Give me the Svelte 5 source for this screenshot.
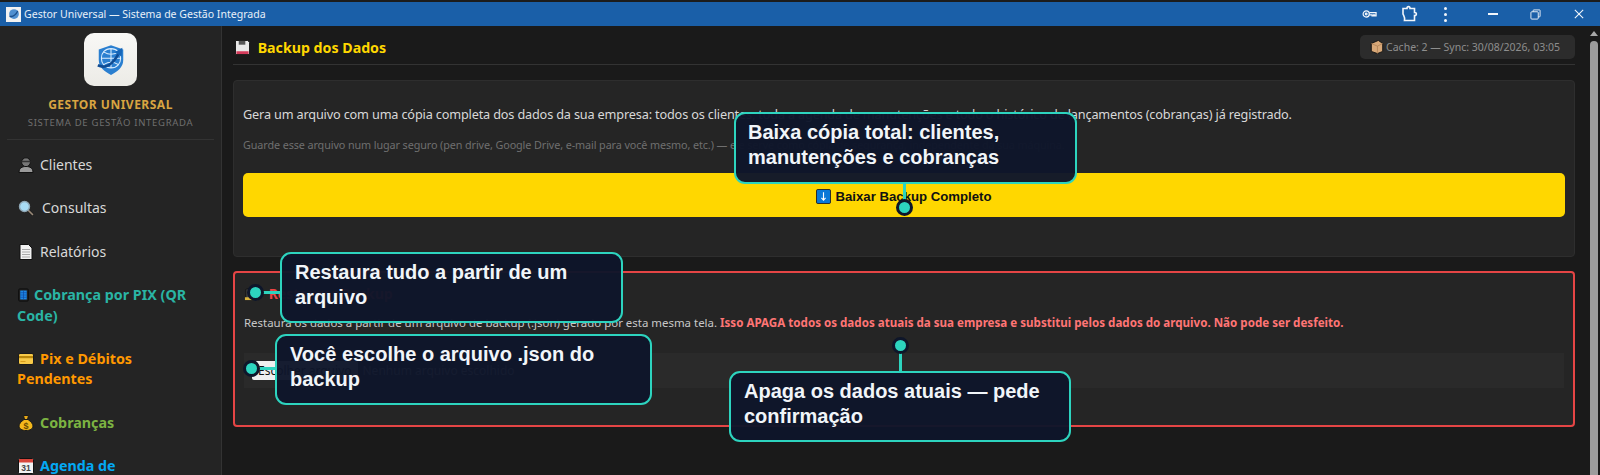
<script>
	// menu lateral, na mesma ordem do app
	const nav = [
		{ icon: 'person', label: 'Clientes', color: '#d8d8d8' },
		{ icon: 'search', label: 'Consultas', color: '#d8d8d8' },
		{ icon: 'doc', label: 'Relatórios', color: '#d8d8d8' },
		{ icon: 'phone', label: 'Cobrança por PIX (QR Code)', color: '#2ab5a5', bold: true },
		{ icon: 'credit', label: 'Pix e Débitos Pendentes', color: '#ff9800', bold: true },
		{ icon: 'bag', label: 'Cobranças', color: '#7cb342', bold: true },
		{ icon: 'cal', label: 'Agenda de Manutenções', color: '#03a9f4', bold: true }
	];
</script>

{#snippet emoji(name)}
	<svg class="emoji {name}" viewBox="0 0 16 16" aria-hidden="true">
		{#if name === 'person'}
			<circle cx="8" cy="5.2" r="4.4" fill="#777" stroke="#111" />
			<path d="M3.500 4.500h9" stroke="#333" stroke-width="1.500" />
			<path d="M1 15.500c0-4.500 3-6 7-6s7 1.500 7 6z" fill="#9a9a9a" stroke="#111" />
		{:else if name === 'search'}
			<path d="M10 10l4.500 4.500" stroke="#222" stroke-width="3.400" stroke-linecap="round" />
			<path d="M10 10l4.500 4.500" stroke="#9a8a78" stroke-width="1.600" stroke-linecap="round" />
			<circle cx="6.500" cy="6.500" r="5" fill="#a8dcf5" stroke="#8fa7b5" stroke-width="1.400" />
		{:else if name === 'doc'}
			<path d="M2 0.500h8.500l3.500 3.500v11.500H2z" fill="#f2f2f2" stroke="#111" />
			<path d="M4 5.500h8M4 8h8M4 10.500h8M4 13h8" stroke="#a0a0a0" stroke-width="0.900" />
		{:else if name === 'phone'}
			<rect x="2" y="0.500" width="12" height="15" rx="1.500" fill="#222" stroke="#0a0a0a" />
			<rect x="4" y="2.500" width="8" height="11" fill="#1e88e5" />
			<path d="M4 5.200h8M4 8h8M4 10.800h8M8 2.500v11" stroke="#0d47a1" stroke-width="0.800" />
		{:else if name === 'credit'}
			<rect x="0.500" y="2.500" width="15" height="11" rx="1.500" fill="#f7c948" stroke="#1a1a1a" />
			<rect x="1" y="5" width="14" height="2.200" fill="#b8860b" />
			<path d="M2.500 10.500h5" stroke="#d99c1c" />
		{:else if name === 'bag'}
			<path d="M5.500 0.500h5L9.500 4.500h-3z" fill="#e8a917" stroke="#1a1a1a" />
			<path d="M6 4.500h4c3 2 5 4.500 5 6.500 0 3-3 4.500-7 4.500S1 14 1 11c0-2 2-4.500 5-6.500z" fill="#f4b81c" stroke="#1a1a1a" />
			<text x="8" y="13.500" class="dollar">$</text>
		{:else if name === 'cal'}
			<rect x="0.500" y="0.500" width="15" height="15" rx="1" fill="#f2f2f2" stroke="#111" />
			<rect x="1" y="1" width="14" height="3.500" fill="#d9453a" />
			<text x="8" y="13" class="day">31</text>
		{/if}
	</svg>
{/snippet}

<div class="window">
	<header class="titlebar">
		<div class="app-title">
			<span class="app-icon">
				<svg viewBox="0 0 16 16" width="12" height="12" aria-hidden="true">
					<circle cx="8" cy="8" r="6.500" fill="#4f8fd0" />
					<path d="M2 11c4 1 8-1 11-7" stroke="#1c4f8c" stroke-width="1.800" fill="none" />
				</svg>
			</span>
			Gestor Universal — Sistema de Gestão Integrada
		</div>
		<div class="title-tools">
			<svg class="tool key" viewBox="0 0 16 10" aria-hidden="true">
				<circle cx="4.500" cy="5" r="3.300" />
				<circle cx="4.500" cy="5" r="0.900" />
				<path d="M7.800 3.500h7.200v3.400h-1.500v-1h-1.300v1h-1.500v-1H7.800" />
			</svg>
			<svg class="tool puzzle" viewBox="0 0 18 18" aria-hidden="true">
				<path d="M3 3.500h4c-.5-2.500 3.500-2.500 3 0h4.500v4c2.500-.5 2.500 3.500 0 3v5H4.500c.8-3-1-5-1.500-6.500z" />
			</svg>
			<span class="kebab"><i></i><i></i><i></i></span>
			<span class="min"></span>
			<svg class="tool restore" viewBox="0 0 12 12" aria-hidden="true">
				<rect x="1" y="3" width="8" height="8" rx="1" />
				<path d="M3.500 3V1.500a.5.5 0 0 1 .5-.5h6.500a.5.5 0 0 1 .5.5V8a.5.5 0 0 1-.5.5H9" />
			</svg>
			<svg class="tool close" viewBox="0 0 12 12" aria-hidden="true">
				<path d="M1 1l10 10M11 1L1 11" />
			</svg>
		</div>
	</header>

	<div class="body">
		<aside class="sidebar">
			<div class="brand">
				<div class="logo">
					<svg viewBox="0 0 32 36" aria-hidden="true">
						<path d="M16 1l14 5v12c0 8-6 13-14 17C8 31 2 26 2 18V6z" fill="#2a7fd0" />
						<path d="M16 5c7 0 11 5 11 11s-4 11-11 11S5 22 5 16 9 5 16 5zM5 16h22M16 5v22M8 9c5 3 11 3 16 0M8 23c5-3 11-3 16 0" fill="none" stroke="#dbeeff" stroke-width="1.200" />
						<path d="M1 24c8 4 17 0 24-14" fill="none" stroke="#0f4c94" stroke-width="3" />
						<path d="M29 4l-1 10-8-5z" fill="#1766b8" />
					</svg>
				</div>
				<div class="brand-name">GESTOR UNIVERSAL</div>
				<div class="brand-sub">SISTEMA DE GESTÃO INTEGRADA</div>
			</div>
			<nav>
				{#each nav as item}
					<a href="#/" class:bold={item.bold} style="color: {item.color}">
						{@render emoji(item.icon)}{item.label}
					</a>
				{/each}
			</nav>
		</aside>

		<main>
			<div class="page-head">
				<h1>
					<svg class="floppy" viewBox="0 0 16 16" aria-hidden="true">
						<path d="M0.500 0.500h13l2 2v13H0.500z" fill="#e8e8e8" stroke="#111" />
						<rect x="1.500" y="12" width="13" height="3" fill="#d43a5a" />
						<rect x="4" y="1" width="7" height="4" fill="#555" />
					</svg>
					Backup dos Dados
				</h1>
				<div class="cache">
					<svg viewBox="0 0 16 16" aria-hidden="true">
						<path d="M1.500 4l8-3.500 5 3.500v9l-6 2.500-7-2.500z" fill="#d8a878" stroke="#111" />
						<path d="M1.500 4l7 3 6-3M8.500 7v8.500" fill="none" stroke="#a87a50" stroke-width="0.800" />
					</svg>
					Cache: 2 — Sync: 30/08/2026, 03:05
				</div>
			</div>

			<section class="card">
				<p class="lead">Gera um arquivo com uma cópia completa dos dados da sua empresa: todos os clientes, toda a agenda de manutenções e todo o histórico de lançamentos (cobranças) já registrado.</p>
				<p class="hint">Guarde esse arquivo num lugar seguro (pen drive, Google Drive, e-mail para você mesmo, etc.) — ele serve como cópia de segurança, independente da sua máquina.</p>
				<button class="download">
					<svg viewBox="0 0 16 16" aria-hidden="true">
						<rect x="0.500" y="0.500" width="15" height="15" rx="1.500" fill="#0a78d7" stroke="#222" />
						<path d="M8 3.500v8M5.800 9.500L8 12l2.200-2.500" stroke="#fff" stroke-width="1.200" fill="none" />
					</svg>
					Baixar Backup Completo
				</button>
			</section>

			<section class="card danger">
				<h2>
					<svg viewBox="0 0 16 16" aria-hidden="true">
						<rect x="2" y="3" width="12" height="11" rx="1" fill="#444" stroke="#111" />
						<rect x="1" y="12" width="14" height="3" fill="#d8b23a" />
					</svg>
					Restaurar Backup
				</h2>
				<p class="warn">Restaura os dados a partir de um arquivo de backup (.json) gerado por esta mesma tela. <strong>Isso APAGA todos os dados atuais da sua empresa e substitui pelos dados do arquivo. Não pode ser desfeito.</strong></p>
				<div class="file-row">
					<span class="file-btn">Escolher arquivo</span>
					<span class="file-name">Nenhum arquivo escolhido</span>
				</div>
			</section>
		</main>

		<div class="scrollbar"><span class="up"></span><span class="thumb"></span></div>
	</div>

	<!-- anotações do tutorial por cima da tela -->
	<div class="callout c1">Baixa cópia total: clientes, manutenções e cobranças</div>
	<span class="wire v w1"></span><span class="dot d1"></span>
	<div class="callout c2">Restaura tudo a partir de um arquivo</div>
	<span class="wire h w2"></span><span class="dot d2"></span>
	<div class="callout c3">Você escolhe o arquivo .json do backup</div>
	<span class="wire h w3"></span><span class="dot d3"></span>
	<div class="callout c4">Apaga os dados atuais — pede confirmação</div>
	<span class="wire v w4"></span><span class="dot d4"></span>
</div>

<style>
	:global(body) {
		background: #1a1a1a;
		overflow: hidden;
	}

	.window {
		position: relative;
		width: 1600px;
		height: 475px;
		overflow: hidden;
		display: flex;
		flex-direction: column;
		font-family: "Noto Sans", "Open Sans", sans-serif;
		background: #1a1a1a;
		border-top: 2px solid #1c1c1c;
		box-sizing: border-box;
	}

	.titlebar {
		flex: none;
		height: 24px;
		background: #1a5fa8;
		color: #e8f0f8;
		display: flex;
		align-items: center;
		justify-content: space-between;
		font-size: 10.55px;
	}

	.app-title {
		display: flex;
		align-items: center;
		gap: 3px;
		padding-left: 6px;
	}

	.app-icon {
		width: 15px;
		height: 15px;
		background: #f2f2f2;
		display: flex;
		align-items: center;
		justify-content: center;
	}

	.title-tools {
		display: flex;
		align-items: center;
		height: 100%;
		padding-right: 16px;
	}

	.tool {
		fill: none;
		stroke: #f2f6fb;
		stroke-width: 1.3;
	}

	.key { width: 15px; height: 10px; margin-right: 23px; }
	.puzzle { width: 18px; height: 18px; margin-right: 26px; stroke-width: 1.6; }
	.restore { width: 11px; height: 11px; margin-right: 33px; stroke-width: 1; }
	.close { width: 10px; height: 10px; }

	.kebab {
		display: flex;
		flex-direction: column;
		gap: 3px;
		margin-right: 41px;
	}

	.kebab i {
		width: 3px;
		height: 3px;
		border-radius: 50%;
		background: #f2f6fb;
	}

	.min {
		width: 10px;
		height: 1.5px;
		background: #f2f6fb;
		margin-right: 32px;
	}

	.body {
		flex: 1;
		display: flex;
		min-height: 0;
	}

	.sidebar {
		flex: none;
		width: 221px;
		background: #242424;
		border-right: 1px solid #333;
		overflow: hidden;
	}

	.brand {
		display: flex;
		flex-direction: column;
		align-items: center;
		margin: 0 7px;
		padding: 7px 0 10px;
		border-bottom: 1px solid #333;
	}

	.logo {
		width: 53px;
		height: 53px;
		border-radius: 10px;
		background: linear-gradient(#f8f8f6, #ecebe6);
		display: flex;
		align-items: center;
		justify-content: center;
	}

	.logo svg {
		width: 28px;
		height: 32px;
	}

	.brand-name {
		margin-top: 10px;
		font-size: 12px;
		font-weight: 700;
		letter-spacing: 0.5px;
		color: #d9a441;
	}

	.brand-sub {
		margin-top: 3px;
		font-size: 9.5px;
		letter-spacing: 0.7px;
		color: #6f6f6f;
	}

	nav {
		display: flex;
		flex-direction: column;
		padding-top: 15px;
	}

	nav a {
		display: block;
		padding: 0 17px;
		margin-bottom: 23px;
		font-size: 14px;
		line-height: 20.4px;
		text-decoration: none;
	}

	nav a.bold {
		font-size: 14.3px;
		font-weight: 700;
	}

	.emoji {
		width: 16px;
		height: 16px;
		vertical-align: -3px;
		margin: 0 6px 0 1px;
	}

	.emoji.phone {
		width: 13px;
		margin-right: 4px;
		margin-left: 0;
	}

	.emoji.search {
		margin-right: 8px;
	}

	.dollar,
	.day {
		font-family: "Liberation Sans", sans-serif;
		text-anchor: middle;
		font-weight: 700;
	}

	.dollar { font-size: 9px; fill: #6a4a00; }
	.day { font-size: 8.5px; fill: #444; }

	main {
		flex: 1;
		min-width: 0;
		padding: 0 12px 0 11px;
	}

	.page-head {
		display: flex;
		justify-content: space-between;
		align-items: center;
		height: 39px;
		box-sizing: border-box;
		padding-top: 4px;
		border-bottom: 1px solid #333;
		margin-bottom: 15px;
	}

	h1 {
		margin: 0;
		padding-left: 2px;
		font-size: 14.2px;
		font-weight: 700;
		color: #ffd700;
	}

	.floppy {
		width: 15px;
		height: 15px;
		vertical-align: -2px;
		margin-right: 4px;
	}

	.cache {
		display: flex;
		align-items: center;
		height: 24px;
		padding: 0 15px 0 10px;
		border-radius: 5px;
		background: #2c2c2c;
		font-size: 10.5px;
		color: #8e8e8e;
	}

	.cache svg {
		width: 14px;
		height: 14px;
		margin-right: 2px;
	}

	.card {
		background: #252525;
		border: 1px solid #2e2e2e;
		border-radius: 4px;
		padding: 0 9px;
		height: 177px;
		box-sizing: border-box;
	}

	p {
		margin: 0;
	}

	.lead {
		padding-top: 24px;
		font-size: 12.7px;
		letter-spacing: -0.16px;
		line-height: 18px;
		color: #d8d8d8;
	}

	.hint {
		padding-top: 14px;
		font-size: 10.8px;
		letter-spacing: -0.1px;
		line-height: 16px;
		color: #6f6f6f;
	}

	.download {
		display: flex;
		align-items: center;
		justify-content: center;
		gap: 4px;
		width: 100%;
		height: 44px;
		margin-top: 20px;
		padding-top: 4px;
		border: 0;
		border-radius: 5px;
		background: #ffd700;
		color: #111;
		font: 700 13.2px "Liberation Sans", sans-serif;
	}

	.download svg {
		width: 15px;
		height: 15px;
	}

	.danger {
		margin-top: 14px;
		height: 156px;
		border: 2px solid #e54545;
	}

	h2 {
		margin: 0;
		padding-top: 11px;
		font-size: 14px;
		line-height: 20px;
		font-weight: 700;
		color: #ef4444;
	}

	h2 svg {
		width: 15px;
		height: 15px;
		vertical-align: -2px;
		margin-right: 6px;
	}

	.warn {
		margin-top: 11px;
		font-size: 11.45px;
		line-height: 16px;
		color: #c8c8c8;
	}

	.warn strong {
		font-size: 11.6px;
		font-weight: 700;
		color: #ff7575;
	}

	.file-row {
		display: flex;
		align-items: center;
		gap: 5px;
		height: 35px;
		margin-top: 22px;
		padding: 0 8px;
		background: #2a2a2a;
		font-size: 12px;
		color: #c8c8c8;
	}

	.file-btn {
		padding: 1px 6px;
		background: #efefef;
		color: #111;
		border-radius: 2px;
	}

	.scrollbar {
		flex: none;
		width: 13px;
		padding-top: 5px;
		display: flex;
		flex-direction: column;
		align-items: center;
		gap: 5px;
	}

	.up {
		flex: none;
		width: 0;
		height: 0;
		border: 4px solid transparent;
		border-top: 0;
		border-bottom: 5px solid #a8a8a8;
	}

	.thumb {
		flex: none;
		width: 8px;
		height: 440px;
		border-radius: 4px 4px 0 0;
		background: #9c9c9c;
	}

	/* callouts */
	.callout {
		position: absolute;
		box-sizing: border-box;
		padding: 6px 13px 0;
		border: 2px solid #2dd4bf;
		border-radius: 11px;
		background: rgba(14, 22, 42, 0.97);
		color: #f1f5f9;
		font: 700 20px/25px "Liberation Sans", sans-serif;
	}

	.c1 { left: 734px; top: 110px; width: 343px; height: 72px; padding-left: 12px; }
	.c2 { left: 280px; top: 250px; width: 343px; height: 71px; }
	.c3 { left: 275px; top: 332px; width: 377px; height: 71px; }
	.c4 { left: 729px; top: 369px; width: 342px; height: 71px; }

	.wire {
		position: absolute;
		background: #2dd4bf;
	}

	.wire.v { width: 3px; }
	.wire.h { height: 3px; }

	.w1 { left: 903px; top: 181px; height: 20px; }
	.w4 { left: 899px; top: 348px; height: 22px; }
	.w2 { left: 256px; top: 289px; width: 26px; }
	.w3 { left: 253px; top: 365px; width: 24px; }

	.dot {
		position: absolute;
		box-sizing: border-box;
		width: 17px;
		height: 17px;
		border-radius: 50%;
		background: #2dd4bf;
		border: 3px solid #0e162a;
	}

	.d1 { left: 896px; top: 197px; }
	.d2 { left: 247px; top: 282px; }
	.d3 { left: 243px; top: 358px; }
	.d4 { left: 892px; top: 335px; }
</style>
